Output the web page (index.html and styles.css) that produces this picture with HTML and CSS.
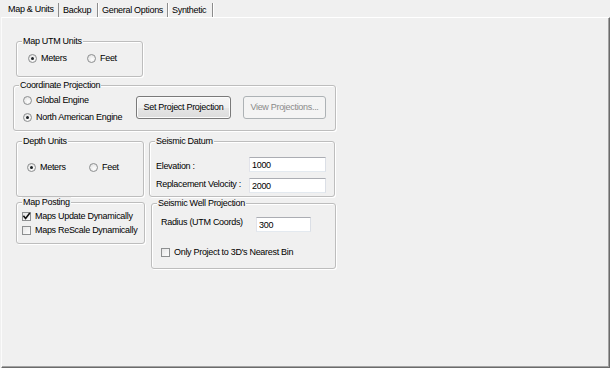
FILE: index.html
```html
<!DOCTYPE html>
<html>
<head>
<meta charset="utf-8">
<title>Map &amp; Units</title>
<link rel="stylesheet" href="styles.css">
</head>
<body>
<div class="dialog">
  <div class="tabs">
    <div class="tab active">Map &amp; Units</div>
    <div class="tab tab-backup">Backup</div>
    <div class="tab tab-general">General Options</div>
    <div class="tab tab-synth">Synthetic</div>
  </div>
  <div class="panel">
    <div class="group g-utm">
      <div class="legend">Map UTM Units</div>
      <div class="radios">
        <div class="opt opt-utm"><span class="radio on"></span>Meters</div>
        <div class="opt"><span class="radio"></span>Feet</div>
      </div>
    </div>

    <div class="group g-coord">
      <div class="legend">Coordinate Projection</div>
      <div class="coord-body">
        <div class="coord-radios">
          <div class="opt"><span class="radio"></span>Global Engine</div>
          <div class="opt opt-second"><span class="radio on"></span>North American Engine</div>
        </div>
        <button class="btn btn-set">Set Project Projection</button>
        <button class="btn btn-view" disabled>View Projections...</button>
      </div>
    </div>

    <div class="row row3">
      <div class="group g-depth">
        <div class="legend">Depth Units</div>
        <div class="radios radios-depth">
          <div class="opt opt-depth"><span class="radio on"></span>Meters</div>
          <div class="opt"><span class="radio"></span>Feet</div>
        </div>
      </div>
      <div class="group g-datum">
        <div class="legend">Seismic Datum</div>
        <div class="fields">
          <div class="field">
            <span class="flabel flabel-elev">Elevation :</span>
            <input class="input input-datum" type="text" value="1000">
          </div>
          <div class="field field-second">
            <span class="flabel flabel-vel">Replacement Velocity :</span>
            <input class="input input-datum" type="text" value="2000">
          </div>
        </div>
      </div>
    </div>

    <div class="row row4">
      <div class="group g-post">
        <div class="legend">Map Posting</div>
        <div class="checks">
          <div class="opt"><span class="check">
            <svg width="9" height="9" viewBox="0 0 9 9"><path d="M1.4 3.8 L3.6 6.5 L7.8 1" fill="none" stroke="#111" stroke-width="1.6"/></svg>
          </span>Maps Update Dynamically</div>
          <div class="opt opt-check2"><span class="check"></span>Maps ReScale Dynamically</div>
        </div>
      </div>
      <div class="group g-well">
        <div class="legend">Seismic Well Projection</div>
        <div class="well-body">
          <div class="field">
            <span class="flabel flabel-radius">Radius (UTM Coords)</span>
            <input class="input input-radius" type="text" value="300">
          </div>
          <div class="opt opt-bin"><span class="check"></span>Only Project to 3D's Nearest Bin</div>
        </div>
      </div>
    </div>
  </div>
</div>
</body>
</html>
```

FILE: styles.css
```css
* { box-sizing: border-box; }
html, body { margin: 0; padding: 0; }
body {
  background: #f0f0f0;
  font-family: "Liberation Sans", Arial, sans-serif;
  font-size: 9px;
  letter-spacing: -0.3px;
  line-height: 11px;
  color: #000;
}
.dialog {
  width: 610px;
  height: 368px;
  display: flex;
  flex-direction: column;
  overflow: hidden;
}

/* tabs */
.tabs {
  height: 17px;
  flex: none;
  display: flex;
  align-items: flex-end;
}
.tab {
  height: 14px;
  padding: 2px 0 0 4px;
  line-height: 11px;
  white-space: nowrap;
  border-right: 1px solid #8c8c8c;
  box-shadow: 1px 0 0 #ffffff;
}
.tab.active {
  width: 58px;
  height: 17px;
  padding: 4px 0 0 8px;
  border-right: none;
  box-shadow: none;
}
.tab-backup { width: 40px; border-left: 1px solid #8c8c8c; }
.tab-general { width: 70px; }
.tab-synth { width: 45px; }

/* panel */
.panel {
  flex: 1;
  margin-left: 1px;
  border-top: 1px solid #ffffff;
  border-left: 1px solid #fbfbfb;
  border-right: 1px solid #6b6b6b;
  border-bottom: 1px solid #6b6b6b;
  box-shadow: inset -1px -1px 0 #a3a3a3;
  padding: 23px 0 0 14px;
}

/* group boxes */
.group {
  border: 1px solid #bdbdbd;
  border-radius: 3px;
  box-shadow: 1px 1px 0 #ffffff, inset 1px 1px 0 #ffffff;
}
.legend {
  display: block;
  width: max-content;
  margin: -6px 0 0 5px;
  padding: 0 1px;
  background: #f0f0f0;
  line-height: 11px;
}
.g-utm { width: 127px; height: 36px; }
.g-coord { width: 323px; height: 46px; margin: 8px 0 0 -3px; }
.row { display: flex; align-items: flex-start; }
.row3 { margin-top: 10px; }
.g-depth { width: 128px; height: 56px; }
.g-datum { width: 186px; height: 56px; margin-left: 5px; }
.row4 { margin-top: 5px; }
.g-post { width: 129px; height: 42px; }
.g-well { width: 185px; height: 66px; margin: 1px 0 0 6px; }

/* options */
.opt {
  display: flex;
  align-items: center;
  height: 11px;
  white-space: nowrap;
}
.radio {
  flex: none;
  width: 9px;
  height: 9px;
  margin-right: 4px;
  border-radius: 50%;
  border: 1px solid #8d8f90;
  background: radial-gradient(circle at 60% 65%, #fefefe 0%, #ececec 55%, #d6d6d6 100%);
  display: flex;
  align-items: center;
  justify-content: center;
}
.radio.on::after {
  content: "";
  width: 3px;
  height: 3px;
  border-radius: 50%;
  background: #1b2024;
}
.check {
  flex: none;
  width: 9px;
  height: 9px;
  margin-right: 4px;
  border: 1px solid #8d8f90;
  background: linear-gradient(135deg, #e6e6e6, #fdfdfd);
  display: flex;
  align-items: center;
  justify-content: center;
  overflow: visible;
}
.check svg { display: block; flex: none; }

.radios { display: flex; margin-top: 6px; padding-left: 11px; }
.opt-utm { width: 59px; }
.radios-depth { margin-top: 15px; padding-left: 10px; }
.opt-depth { width: 62px; }

.coord-body {
  display: flex;
  align-items: flex-start;
  margin-top: 4px;
  padding-left: 9px;
}
.coord-radios { width: 113px; flex: none; }
.opt-second { margin-top: 6px; }

/* buttons */
.btn {
  flex: none;
  height: 23px;
  margin-top: 1px;
  padding: 0;
  font: inherit;
  letter-spacing: inherit;
  line-height: 21px;
  color: #000;
  border: 1px solid #7a7a7a;
  border-radius: 3px;
  background: linear-gradient(#f6f6f6 0%, #efefef 50%, #e6e6e6 51%, #dcdcdc 100%);
  box-shadow: inset 0 0 0 1px #fcfcfc;
  text-align: center;
}
.btn-set { width: 95px; }
.btn-view {
  width: 83px;
  margin-left: 12px;
  color: #8a8a8a;
  border-color: #adb2b5;
  background: #f4f4f4;
  box-shadow: none;
}

/* fields */
.fields { margin-top: 10px; padding-left: 6px; }
.field { display: flex; align-items: flex-start; }
.field-second { margin-top: 6px; }
.flabel { flex: none; white-space: nowrap; line-height: 11px; }
.flabel-elev { width: 93px; margin-top: 4px; }
.flabel-vel { width: 93px; margin-top: 1px; }
.flabel-radius { width: 95px; margin-top: 0; }
.input {
  flex: none;
  height: 15px;
  margin: 0;
  padding: 0 2px;
  font: inherit;
  letter-spacing: inherit;
  line-height: 13px;
  color: #000;
  background: #ffffff;
  border: 1px solid;
  border-color: #abadb3 #dbdfe6 #e3e9ef #e2e3ea;
  border-radius: 0;
  outline: none;
}
.input-datum { width: 77px; }
.input-radius { width: 55px; }

.checks { margin-top: 3px; padding-left: 5px; }
.opt-check2 { margin-top: 3px; }

.well-body { margin-top: 8px; padding-left: 9px; }
.opt-bin { margin-top: 15px; }
```
